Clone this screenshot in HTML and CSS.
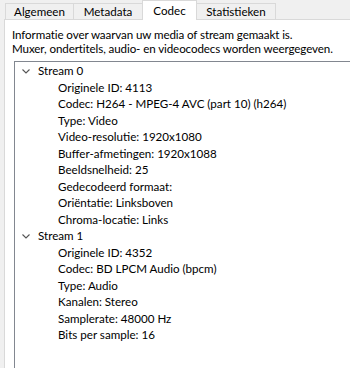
FILE: index.html
```html
<!DOCTYPE html>
<html lang="nl">
<head>
    <meta charset="UTF-8">
    <title>Codec</title>
    <link rel="stylesheet" href="styles.css">
</head>
<body>
    <!-- tabbladen -->
    <div class="tabs">
        <div class="tab tab-algemeen">Algemeen</div>
        <div class="tab tab-metadata">Metadata</div>
        <div class="tab tab-codec selected">Codec</div>
        <div class="tab tab-stats">Statistieken</div>
    </div>

    <div class="panel">
        <p class="info">Informatie over waarvan uw media of stream gemaakt is.<br>Muxer, ondertitels, audio- en videocodecs worden weergegeven.</p>

        <div class="tree">
            <div class="row stream"><span class="chevron"><svg width="8" height="5" viewBox="0 0 8 5"><path d="M0.5 0.5 L4 4 L7.5 0.5" fill="none" stroke="#555" stroke-width="1.1"/></svg></span>Stream 0</div>
            <div class="row child">Originele ID: 4113</div>
            <div class="row child">Codec: H264 - MPEG-4 AVC (part 10) (h264)</div>
            <div class="row child">Type: Video</div>
            <div class="row child">Video-resolutie: 1920x1080</div>
            <div class="row child">Buffer-afmetingen: 1920x1088</div>
            <div class="row child">Beeldsnelheid: 25</div>
            <div class="row child">Gedecodeerd formaat:</div>
            <div class="row child">Oriëntatie: Linksboven</div>
            <div class="row child">Chroma-locatie: Links</div>
            <div class="row stream"><span class="chevron"><svg width="8" height="5" viewBox="0 0 8 5"><path d="M0.5 0.5 L4 4 L7.5 0.5" fill="none" stroke="#555" stroke-width="1.1"/></svg></span>Stream 1</div>
            <div class="row child">Originele ID: 4352</div>
            <div class="row child">Codec: BD LPCM Audio (bpcm)</div>
            <div class="row child">Type: Audio</div>
            <div class="row child">Kanalen: Stereo</div>
            <div class="row child">Samplerate: 48000 Hz</div>
            <div class="row child">Bits per sample: 16</div>
        </div>
    </div>
</body>
</html>
```

FILE: styles.css
```css
* {
    margin: 0;
    padding: 0;
    box-sizing: border-box;
}

html, body {
    height: 100%;
}

body {
    background-color: #f0f0f0;
    font-family: "Lato", "Noto Sans", sans-serif;
    font-size: 11.6px;
    color: #000;
    overflow: hidden;
    display: flex;
    flex-direction: column;
}

/* tabbladen */
.tabs {
    display: flex;
    align-items: flex-end;
    height: 20px;
    padding-left: 5px;
    margin-bottom: -1px;
}

.tab {
    height: 17px;
    line-height: 15px;
    text-align: center;
    border: 1px solid #d9d9d9;
    border-bottom: none;
    background-color: #f0f0f0;
    margin-left: -1px;
}

.tab-algemeen { width: 69px; margin-left: 0; }
.tab-metadata { width: 70px; }
.tab-codec    { width: 55px; }
.tab-stats    { width: 80px; }

.tab.selected {
    height: 20px;
    line-height: 19px;
    background-color: #fff;
    position: relative;
    z-index: 1;
}

/* inhoud */
.panel {
    flex: 1;
    min-height: 0;
    margin-left: 4px;
    background-color: #fff;
    border-left: 1px solid #d9d9d9;
    border-top: 1px solid #d9d9d9;
    padding: 8px 0 0 7px;
    display: flex;
    flex-direction: column;
}

.info {
    line-height: 14px;
    white-space: nowrap;
    letter-spacing: -0.1px;
}

/* boomweergave, loopt door tot buiten het venster */
.tree {
    flex: 1;
    min-height: 0;
    margin: 5px 0 0 2px;
    border-left: 1px solid #828790;
    border-top: 1px solid #828790;
    padding-top: 1px;
    overflow: hidden;
}

.row {
    height: 16.5px;
    line-height: 16px;
    white-space: nowrap;
    display: flex;
    align-items: center;
}

.stream {
    padding-left: 7px;
}

.chevron {
    width: 16px;
    display: flex;
    align-items: center;
}

.child {
    padding-left: 43px;
}
```
